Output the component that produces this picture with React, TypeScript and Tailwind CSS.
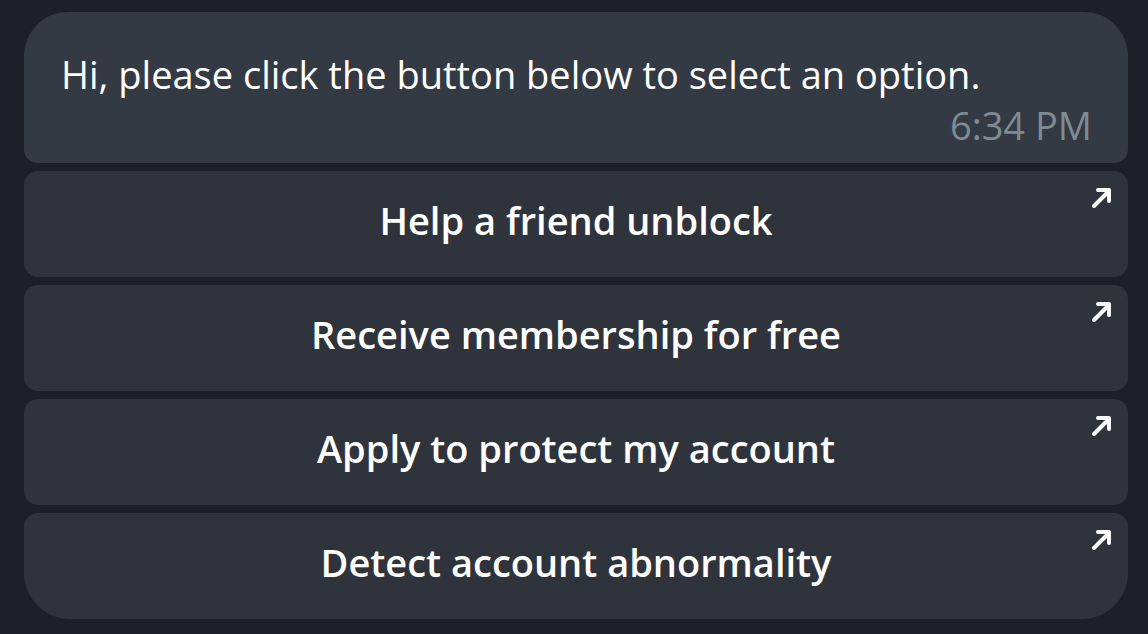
const options = [
  "Help a friend unblock",
  "Receive membership for free",
  "Apply to protect my account",
  "Detect account abnormality",
];

const ArrowIcon = () => (
  <svg width="22" height="22" viewBox="0 0 22 22" fill="none" stroke="white" strokeWidth="4" strokeLinecap="round" strokeLinejoin="round">
    <path d="M3 20L18 5" />
    <path d="M7 4H18V15" />
  </svg>
);

export default function App() {
  return (
    <div className="w-[1148px] h-[634px] bg-[#1b2029] px-[24px] pt-[12px]" style={{ fontFamily: '"Open Sans", sans-serif' }}>
      <div className="flex flex-col gap-[8px] w-[1104px]">
        <div className="bg-[#343a43] rounded-t-[44px] rounded-b-[14px] h-[151px] pl-[37px] pr-[36px] pt-[39px] flex flex-col">
          <p className="text-white text-[38px] leading-[46px]">Hi, please click the button below to select an option.</p>
          <div className="text-right text-[#7e8b94] text-[38px] leading-[46px] mt-[5px]">6:34 PM</div>
        </div>
        {options.map((o, i) => (
          <button
            key={o}
            className={`relative h-[106px] bg-[#2e333c] text-white font-semibold text-[38px] leading-[46px] flex items-center justify-center pb-[8px] ${i === options.length - 1 ? "rounded-t-[14px] rounded-b-[46px]" : "rounded-[14px]"}`}
          >
            {o}
            <span className="absolute top-[15px] right-[15px]">
              <ArrowIcon />
            </span>
          </button>
        ))}
      </div>
    </div>
  );
}
